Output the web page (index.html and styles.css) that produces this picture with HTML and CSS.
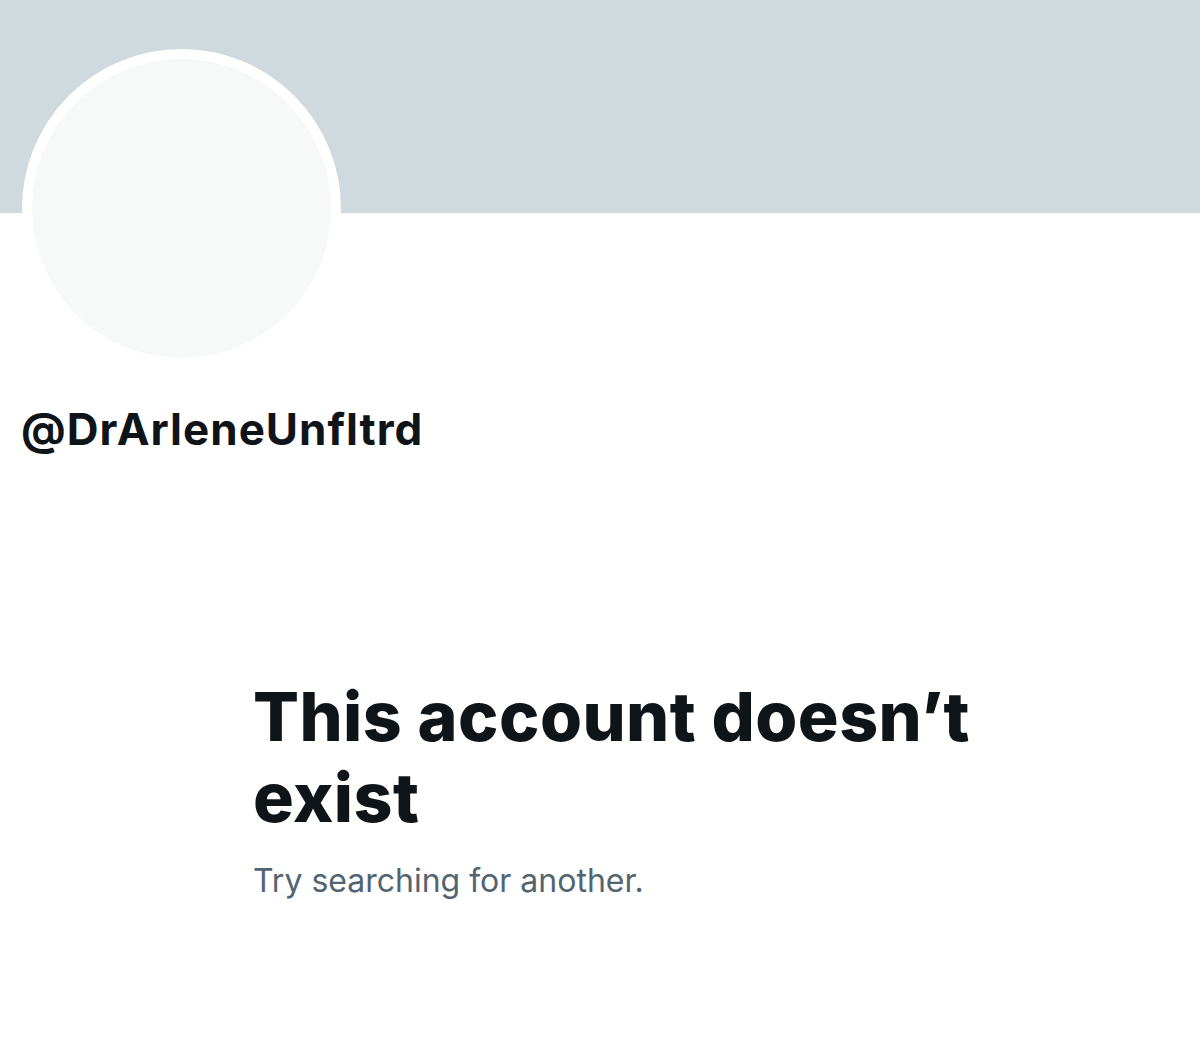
FILE: index.html
```html
<!DOCTYPE html>
<html>
<head>
<meta charset="utf-8">
<link rel="stylesheet" href="styles.css">
</head>
<body>
<div class="banner"></div>
<div class="avatar"><div class="avatar-inner"></div></div>
<div class="handle">@DrArleneUnfltrd</div>
<div class="empty">
  <h1 class="title">This account doesn’t exist</h1>
  <p class="sub">Try searching for another.</p>
</div>
</body>
</html>
```
FILE: styles.css
```css
html, body { margin: 0; padding: 0; background: #fff; }
body { font-family: Inter, "Noto Sans", sans-serif; color: #0f1419; }
.banner { height: 213px; background: #cfd9de; }
.avatar {
  width: 299px; height: 299px;
  margin: -164px 0 0 22px;
  border: 10px solid #fff;
  border-radius: 50%;
  background: #f7f9f9;
}
.handle {
  margin: 33px 0 0 21px;
  font-size: 44px;
  font-weight: 700;
  line-height: 56px;
  letter-spacing: 1px;
}
.empty { padding: 219px 0 0 253px; width: 780px; }
.title {
  margin: 0;
  font-size: 68px;
  font-weight: 800;
  line-height: 81px;
  letter-spacing: 0.45px;
}
.sub {
  margin: 21px 0 0;
  font-size: 32px;
  font-weight: 400;
  color: #536471;
  line-height: 44px;
}
```
